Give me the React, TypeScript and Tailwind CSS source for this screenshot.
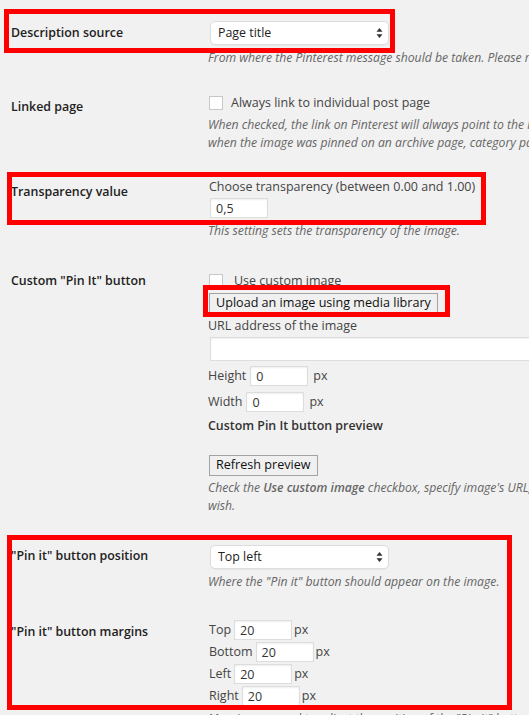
import React from 'react';

const label = 'text-[12.4px] font-semibold text-[#222] leading-[20px] whitespace-nowrap';
const desc = 'text-[12.2px] italic text-[#666] leading-[18px] whitespace-nowrap';
const text = 'text-[12.5px] text-[#444] leading-[20px] whitespace-nowrap';

function SelectBox({ value }: { value: string }) {
  return (
    <div className="ml-[2px] flex h-[24px] w-[179px] items-center justify-between rounded-[5px] border border-[#dcdcdc] bg-white pl-[7px] pr-[5px] shadow-[0_1px_1px_rgba(0,0,0,0.04)]">
      <span className="text-[12.4px] text-[#222]">{value}</span>
      <svg width="7" height="12" viewBox="0 0 7 12" className="text-[#333]">
        <path d="M3.5 1 L6.5 4.8 L0.5 4.8 Z" fill="currentColor" />
        <path d="M0.5 7.2 L6.5 7.2 L3.5 11 Z" fill="currentColor" />
      </svg>
    </div>
  );
}

function TextInput({ value, className }: { value: string; className: string }) {
  return (
    <input
      readOnly
      value={value}
      className={`block h-[20px] border border-[#dddddd] bg-white pl-[5px] text-[12.5px] text-[#333] shadow-[inset_0_1px_2px_rgba(0,0,0,0.07)] outline-none ${className}`}
    />
  );
}

function Checkbox() {
  return <span className="ml-[1px] block h-[14px] w-[14px] shrink-0 border border-[#c8c8c8] bg-white" />;
}

function Row({ title, labelPad, className, children }: { title: string; labelPad: string; className: string; children: React.ReactNode }) {
  return (
    <div className={`flex ${className}`}>
      <div className={`w-[208px] shrink-0 pl-[11px] ${labelPad}`}>
        <div className={label}>{title}</div>
      </div>
      <div className="min-w-0 flex-1">{children}</div>
    </div>
  );
}

function MarginRow({ name, value }: { name: string; value: string }) {
  return (
    <div className="flex h-[20px] items-center">
      <span className={`${text} pl-[1px]`}>{name}</span>
      <TextInput value={value} className="ml-[3px] w-[58px]" />
      <span className={`${text} ml-[2px]`}>px</span>
    </div>
  );
}

export default function App() {
  return (
    <div className="relative h-[715px] w-[529px] overflow-hidden bg-[#f1f1f1] font-['Open_Sans',sans-serif] text-[#444]">
      <div className="flex flex-col">
        <Row title="Description source" labelPad="pt-[2px]" className="pt-[21px]">
          <SelectBox value="Page title" />
          <div className={`${desc} mt-[4px]`}>
            From where the Pinterest message should be taken. Please remember that the description is limited.
          </div>
        </Row>

        <Row title="Linked page" labelPad="pt-[4px]" className="mt-[26px]">
          <div className="flex h-[20px] items-center gap-[8px]">
            <Checkbox />
            <span className={text}>Always link to individual post page</span>
          </div>
          <div className={`${desc} mt-[3px]`}>
            <div>When checked, the link on Pinterest will always point to the individual post page, even</div>
            <div>when the image was pinned on an archive page, category page or homepage.</div>
          </div>
        </Row>

        <Row title="Transparency value" labelPad="pt-[5px]" className="mt-[25px]">
          <div className={`${text} pl-[1px]`}>Choose transparency (between 0.00 and 1.00)</div>
          <TextInput value="0,5" className="ml-[2px] mt-[1px] w-[58px]" />
          <div className={`${desc} mt-[4px]`}>This setting sets the transparency of the image.</div>
        </Row>

        <Row title={'Custom "Pin It" button'} labelPad="pt-[1px]" className="mt-[30px]">
          <div className="flex h-[22px] items-center gap-[11px]">
            <Checkbox />
            <span className={text}>Use custom image</span>
          </div>
          <button className="ml-[1px] mt-[1px] flex h-[20px] items-center border border-[#a3a3a3] bg-[#f0f0f0] px-[6px] text-[12.6px] text-[#111]">
            Upload an image using media library
          </button>
          <div className={`${text} mt-[3px]`}>URL address of the image</div>
          <TextInput value="" className="ml-[2px] mt-[1px] h-[24px] w-[340px]" />
          <div className="mt-[5px] flex h-[20px] items-center">
            <span className={text}>Height</span>
            <TextInput value="0" className="ml-[4px] w-[58px]" />
            <span className={`${text} ml-[5px]`}>px</span>
          </div>
          <div className="mt-[6px] flex h-[20px] items-center">
            <span className={text}>Width</span>
            <TextInput value="0" className="ml-[4px] w-[58px]" />
            <span className={`${text} ml-[5px]`}>px</span>
          </div>
          <div className={`${label} mt-[4px] text-[#333]`}>Custom Pin It button preview</div>
          <button className="ml-[1px] mt-[19px] flex h-[21px] items-center border border-[#a3a3a3] bg-[#f0f0f0] px-[6px] text-[12.6px] text-[#111]">
            Refresh preview
          </button>
          <div className={`${desc} mt-[3px]`}>
            <div>
              Check the <span className="font-semibold">Use custom image</span> checkbox, specify image's URL, height and width and refresh the preview if you
            </div>
            <div>wish.</div>
          </div>
        </Row>

        <Row title={'"Pin it" button position'} labelPad="pt-[1px]" className="mt-[30px]">
          <SelectBox value="Top left" />
          <div className={`${desc} mt-[4px]`}>Where the "Pin it" button should appear on the image.</div>
        </Row>

        <Row title={'"Pin it" button margins'} labelPad="pt-[2px]" className="mt-[29px]">
          <div className="flex flex-col gap-[2px]">
            <MarginRow name="Top" value="20" />
            <MarginRow name="Bottom" value="20" />
            <MarginRow name="Left" value="20" />
            <MarginRow name="Right" value="20" />
          </div>
          <div className={`${desc} mt-[4px]`}>Margins are used to adjust the position of the "Pin it" button on the image.</div>
        </Row>
      </div>

      {/* red annotation frames drawn over the form */}
      <div className="pointer-events-none absolute left-[4px] top-[9px] h-[44px] w-[391px] border-[5px] border-[#ff0000]" />
      <div className="pointer-events-none absolute left-[7px] top-[172px] h-[53px] w-[479px] border-[5px] border-[#ff0000]" />
      <div className="pointer-events-none absolute left-[203px] top-[285px] h-[32px] w-[247px] border-[5px] border-[#ff0000]" />
      <div className="pointer-events-none absolute left-[7px] top-[535px] h-[175px] w-[505px] border-[5px] border-[#ff0000]" />
    </div>
  );
}
